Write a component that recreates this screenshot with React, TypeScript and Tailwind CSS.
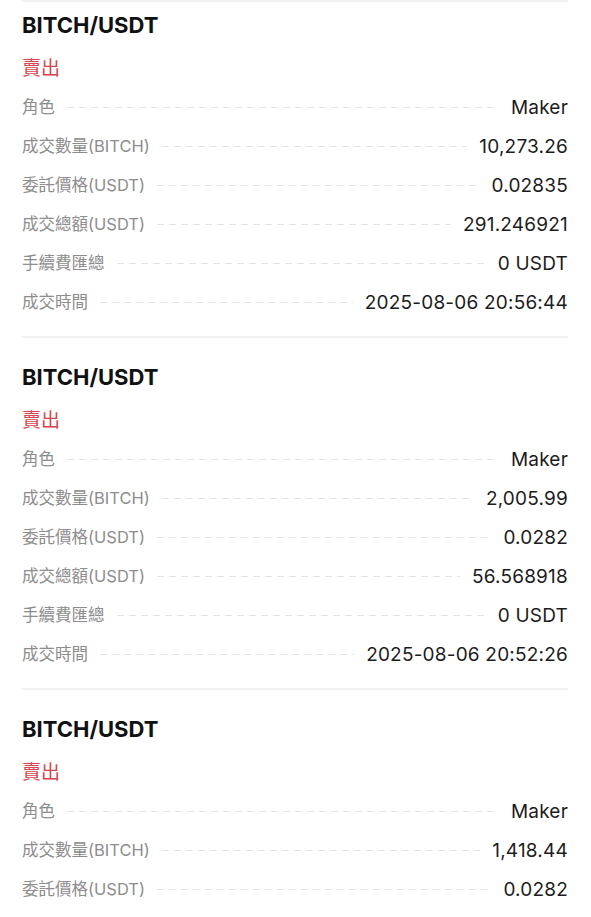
import React from "react";

type Row = { label: string; value: string };
type Trade = { rows: Row[] };

const trades: Trade[] = [
  {
    rows: [
      { label: "角色", value: "Maker" },
      { label: "成交數量(BITCH)", value: "10,273.26" },
      { label: "委託價格(USDT)", value: "0.02835" },
      { label: "成交總額(USDT)", value: "291.246921" },
      { label: "手續費匯總", value: "0 USDT" },
      { label: "成交時間", value: "2025-08-06 20:56:44" },
    ],
  },
  {
    rows: [
      { label: "角色", value: "Maker" },
      { label: "成交數量(BITCH)", value: "2,005.99" },
      { label: "委託價格(USDT)", value: "0.0282" },
      { label: "成交總額(USDT)", value: "56.568918" },
      { label: "手續費匯總", value: "0 USDT" },
      { label: "成交時間", value: "2025-08-06 20:52:26" },
    ],
  },
  {
    rows: [
      { label: "角色", value: "Maker" },
      { label: "成交數量(BITCH)", value: "1,418.44" },
      { label: "委託價格(USDT)", value: "0.0282" },
    ],
  },
];

function DetailRow({ label, value }: Row) {
  return (
    <div className="flex h-[39px] items-center">
      <span className="whitespace-nowrap text-[16.5px] leading-none text-[#8d8d8d]">{label}</span>
      <div className="mx-3 h-px flex-1 bg-[linear-gradient(to_right,#e4e4e4_58%,transparent_0)] bg-[length:12px_1px] bg-repeat-x" />
      <span className="whitespace-nowrap text-[19px] leading-none tracking-[0.2px] text-[#1c1c1c]">{value}</span>
    </div>
  );
}

function Card({ trade, first }: { trade: Trade; first: boolean }) {
  return (
    <div className={first ? "pt-[8px]" : "pt-[24px]"}>
      <div className="flex h-[30px] items-center text-[22px] font-bold leading-none text-[#111111]">BITCH/USDT</div>
      <div className="mt-[13px] flex h-[30px] items-center text-[19px] leading-none text-[#d4464e]">賣出</div>
      <div className="mt-[5px]">
        {trade.rows.map((r) => (
          <DetailRow key={r.label} {...r} />
        ))}
      </div>
      <div className="mt-[14px] h-[2px] bg-[#f1f1f1]" />
    </div>
  );
}

export default function App() {
  return (
    <div
      className="h-[917px] w-[591px] overflow-hidden bg-white pl-[22px] pr-[23px]"
      style={{ fontFamily: '"Inter", "Noto Sans CJK TC", sans-serif' }}
    >
      <div className="h-[2px] bg-[#f1f1f1]" />
      {trades.map((t, i) => (
        <Card key={i} trade={t} first={i === 0} />
      ))}
    </div>
  );
}
